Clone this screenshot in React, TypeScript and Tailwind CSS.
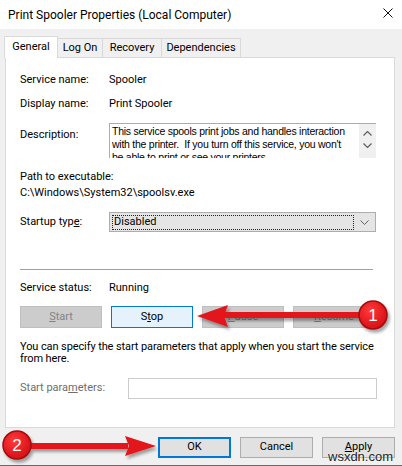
import React from 'react';

const ui = "font-['Roboto','Liberation_Sans',sans-serif]";

const GrayButton: React.FC<{ children: React.ReactNode }> = ({ children }) => (
  <div className="h-[22px] w-[82px] flex items-center justify-center bg-[#cccccc] border border-[#bfbfbf] text-[#838383]">
    {children}
  </div>
);

const DialogButton: React.FC<{ children: React.ReactNode; primary?: boolean }> = ({ children, primary }) => (
  <div
    className={
      primary
        ? 'h-[21px] w-[73px] flex items-center justify-center bg-[#e1e1e1] border-2 border-[#0078d7] text-black'
        : 'h-[21px] w-[73px] flex items-center justify-center bg-[#e1e1e1] border border-[#adadad] text-black'
    }
  >
    {children}
  </div>
);

const Annotations = () => (
  <svg className="absolute inset-0 pointer-events-none" width="402" height="466" viewBox="0 0 402 466">
    <defs>
      <filter id="shadow" x="-20%" y="-40%" width="140%" height="180%">
        <feDropShadow dx="2" dy="3" stdDeviation="1.5" floodColor="#000" floodOpacity="0.35" />
      </filter>
      <radialGradient id="dot" cx="40%" cy="35%" r="70%">
        <stop offset="0%" stopColor="#ff3a3a" />
        <stop offset="100%" stopColor="#d40d14" />
      </radialGradient>
    </defs>
    <g filter="url(#shadow)">
      <rect x="224" y="312" width="140" height="6" fill="#e3141c" />
      <polygon points="197,316 228,305 224,316 228,327" fill="#e3141c" />
      <rect x="28" y="443" width="100" height="6" fill="#e3141c" />
      <polygon points="156,446 125,436 129,446 125,456" fill="#e3141c" />
      <circle cx="373" cy="315" r="14" fill="url(#dot)" stroke="#a30a0f" strokeWidth="1.5" />
      <circle cx="17" cy="445" r="14" fill="url(#dot)" stroke="#a30a0f" strokeWidth="1.5" />
    </g>
    <text x="373" y="321" textAnchor="middle" fontFamily="Liberation Sans, sans-serif" fontSize="17" fill="#fff">1</text>
    <text x="17" y="451" textAnchor="middle" fontFamily="Liberation Sans, sans-serif" fontSize="17" fill="#fff">2</text>
  </svg>
);

export default function App() {
  return (
    <div className={`relative w-[402px] h-[466px] overflow-hidden bg-[#f0f0f0] flex flex-col text-[11px] text-black ${ui}`}>
      {/* title bar */}
      <div className="h-[29px] bg-white flex items-center justify-between pl-[8px] pr-[9px]">
        <span className="text-[12px]">Print Spooler Properties (Local Computer)</span>
        <svg width="10" height="10" viewBox="0 0 10 10" className="mb-[3px]">
          <path d="M0.5 0.5 L9.5 9.5 M9.5 0.5 L0.5 9.5" stroke="#111" strokeWidth="1" />
        </svg>
      </div>

      {/* tabs */}
      <div className="mt-[7px] h-[21px] flex items-end pl-[4px]">
        <div className="relative z-10 -mb-px h-[22px] w-[54px] flex items-center justify-center bg-white border-l border-t border-r border-[#d9d9d9]">
          General
        </div>
        <div className="h-[19px] w-[45px] flex items-center justify-center border-t border-r border-[#d9d9d9]">Log On</div>
        <div className="h-[19px] w-[59px] flex items-center justify-center border-t border-r border-[#d9d9d9]">Recovery</div>
        <div className="h-[19px] w-[79px] flex items-center justify-center border-t border-r border-[#d9d9d9]">Dependencies</div>
      </div>

      {/* panel */}
      <div className="ml-[5px] w-[390px] h-[371px] bg-white border border-[#d9d9d9] pl-[14px] pt-[14px] flex flex-col">
        <div className="flex h-[16px] items-center">
          <span className="w-[89px]">Service name:</span>
          <span>Spooler</span>
        </div>
        <div className="mt-[8px] flex h-[16px] items-center">
          <span className="w-[89px]">Display name:</span>
          <span>Print Spooler</span>
        </div>
        <div className="mt-[11px] flex">
          <span className="w-[89px] mt-[4px] leading-[16px]">Description:</span>
          <div className="w-[267px] h-[35px] flex border-t border-l border-[#acacac] overflow-hidden">
            <div className="flex-1 overflow-hidden pl-[2px] pt-[1px] whitespace-nowrap font-['Liberation_Sans',sans-serif] text-[10.5px] leading-[13px] tracking-[-0.25px]">
              This service spools print jobs and handles interaction
              <br />
              with the printer.&nbsp; If you turn off this service, you won't
              <br />
              be able to print or see your printers.
            </div>
            <div className="w-[17px] shrink-0 bg-[#f0f0f0] flex flex-col items-center pt-[7px] gap-[7px]">
              <svg width="9" height="5" viewBox="0 0 9 5">
                <path d="M0.5 4.5 L4.5 0.5 L8.5 4.5" fill="none" stroke="#606060" strokeWidth="1.2" />
              </svg>
              <svg width="9" height="5" viewBox="0 0 9 5">
                <path d="M0.5 0.5 L4.5 4.5 L8.5 0.5" fill="none" stroke="#606060" strokeWidth="1.2" />
              </svg>
            </div>
          </div>
        </div>
        <div className="mt-[11px] h-[16px] flex items-center">Path to executable:</div>
        <div className="h-[16px] flex items-center">C:\Windows\System32\spoolsv.exe</div>
        <div className="mt-[11px] flex items-center">
          <span className="w-[89px]">
            Startup typ<span className="underline">e</span>:
          </span>
          <div className="w-[267px] h-[20px] bg-[#e5e5e5] border border-[#adadad] flex items-center pl-[2px] pr-[6px]">
            <div className="flex-1 h-[15px] border border-dotted border-[#222] flex items-center pl-[1px]">Disabled</div>
            <svg width="9" height="5" viewBox="0 0 9 5" className="ml-[6px]">
              <path d="M0.5 0.5 L4.5 4.5 L8.5 0.5" fill="none" stroke="#606060" strokeWidth="1" />
            </svg>
          </div>
        </div>
        <div className="mt-[37px] w-[353px] h-px bg-[#a0a0a0]" />
        <div className="mt-[10px] flex h-[16px] items-center">
          <span className="w-[89px]">Service status:</span>
          <span>Running</span>
        </div>
        <div className="mt-[10px] flex gap-[9px]">
          <GrayButton>
            <span className="underline">S</span>tart
          </GrayButton>
          <div className="h-[22px] w-[82px] flex items-center justify-center bg-[#e5f1fb] border border-[#0078d7]">
            S<span className="underline">t</span>op
          </div>
          <GrayButton>
            <span className="underline">P</span>ause
          </GrayButton>
          <GrayButton>
            <span className="underline">R</span>esume
          </GrayButton>
        </div>
        <div className="mt-[13px] leading-[12px] whitespace-nowrap tracking-[-0.1px]">
          You can specify the start parameters that apply when you start the service
          <br />
          from here.
        </div>
        <div className="mt-[13px] flex items-center">
          <span className="w-[108px] text-[#6d6d6d]">
            Start para<span className="underline">m</span>eters:
          </span>
          <div className="w-[249px] h-[21px] bg-white border border-[#cccccc]" />
        </div>
      </div>

      {/* dialog buttons */}
      <div className="mt-[9px] flex justify-end gap-[9px] pr-[7px]">
        <DialogButton primary>OK</DialogButton>
        <DialogButton>Cancel</DialogButton>
        <DialogButton>
          <span className="underline">A</span>pply
        </DialogButton>
      </div>
      <div className="mt-auto h-px bg-[#6a6a6a]" />

      <Annotations />

      <div className="absolute left-[328px] top-[447px] font-['Liberation_Sans',sans-serif] text-[13px] text-[#1e1e1e] [text-shadow:0_0_2px_#ffffff]">
        wsxdn.com
      </div>
    </div>
  );
}
